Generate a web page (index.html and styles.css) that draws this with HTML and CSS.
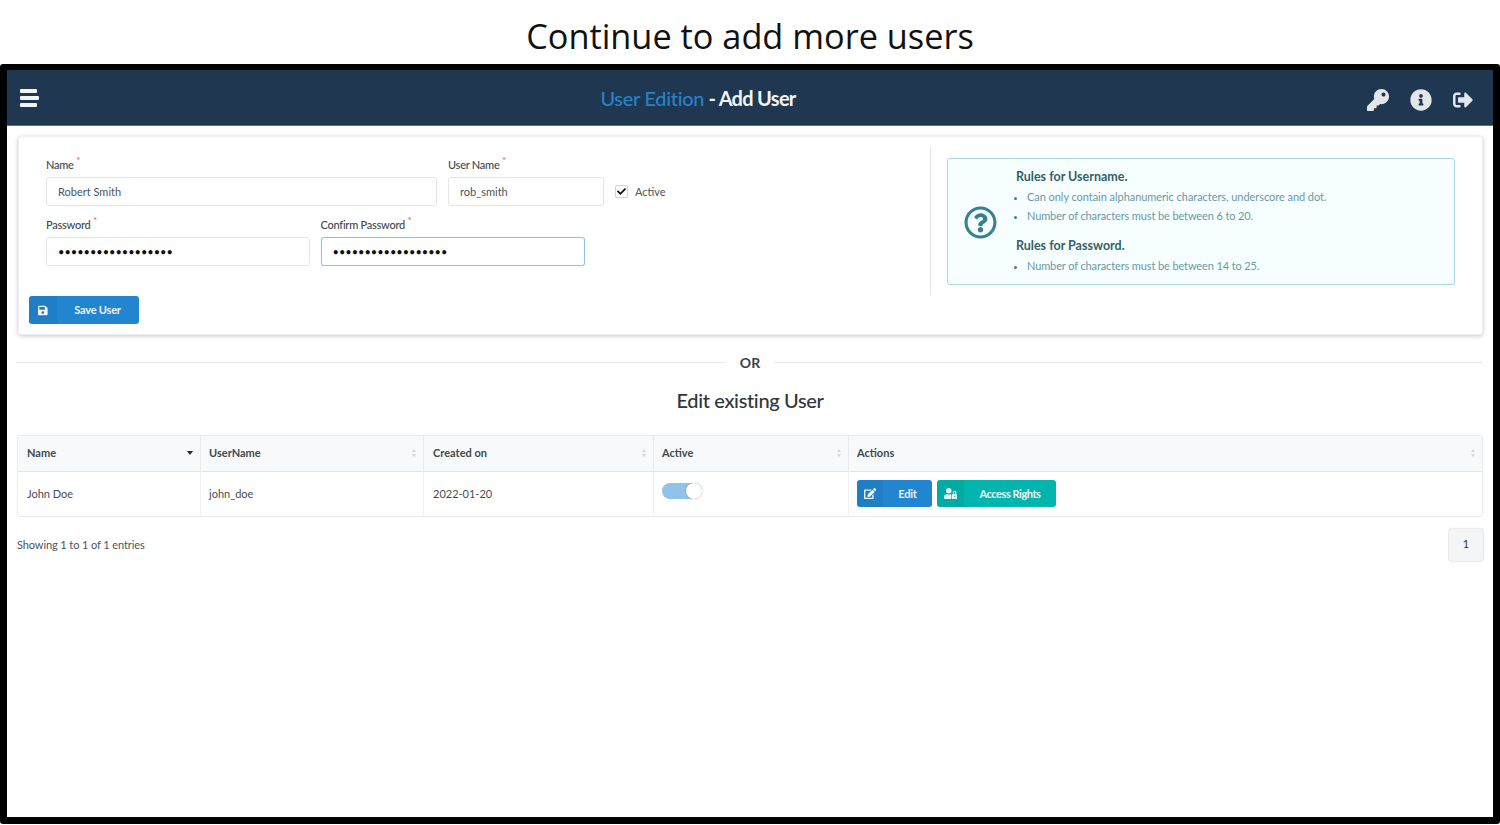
FILE: index.html
```html
<!DOCTYPE html>
<html lang="en">
<head>
    <meta charset="UTF-8">
    <title>User Edition - Add User</title>
    <link rel="stylesheet" href="styles.css">
</head>
<body>
<h1 class="slide-title">Continue to add more users</h1>
<div class="frame">
    <header class="topbar">
        <div class="burger"><span></span><span class="mid"></span><span></span></div>
        <div class="topbar-title"><span class="accent">User Edition</span> - Add User</div>
        <div class="topbar-icons">
            <svg class="icon-key" viewBox="0 0 512 512"><path d="M512 176.001C512 273.203 433.202 352 336 352c-11.22 0-22.19-1.062-32.827-3.069l-24.012 27.014A23.999 23.999 0 0 1 261.223 384H224v40c0 13.255-10.745 24-24 24h-40v40c0 13.255-10.745 24-24 24H24c-13.255 0-24-10.745-24-24v-78.059c0-6.365 2.529-12.47 7.029-16.971l161.802-161.802C163.108 213.814 160 195.271 160 176 160 78.798 238.797.001 335.999 0 433.488-.001 512 78.511 512 176.001zM336 128c0 26.51 21.49 48 48 48s48-21.49 48-48-21.49-48-48-48-48 21.49-48 48z"/></svg>
            <svg class="icon-info" viewBox="0 0 512 512"><path d="M256 8C119.043 8 8 119.083 8 256c0 136.997 111.043 248 248 248s248-111.003 248-248C504 119.083 392.957 8 256 8zm0 110c23.196 0 42 18.804 42 42s-18.804 42-42 42-42-18.804-42-42 18.804-42 42-42zm56 254c0 6.627-5.373 12-12 12h-88c-6.627 0-12-5.373-12-12v-24c0-6.627 5.373-12 12-12h12v-64h-12c-6.627 0-12-5.373-12-12v-24c0-6.627 5.373-12 12-12h64c6.627 0 12 5.373 12 12v100h12c6.627 0 12 5.373 12 12v24z"/></svg>
            <svg class="icon-out" viewBox="0 0 512 512"><path d="M497 273L329 441c-15 15-41 4.5-41-17v-96H152c-13.3 0-24-10.7-24-24v-96c0-13.3 10.7-24 24-24h136V88c0-21.4 25.9-32 41-17l168 168c9.3 9.4 9.3 24.6 0 34zM192 436v-40c0-6.6-5.4-12-12-12H96c-17.7 0-32-14.3-32-32V160c0-17.7 14.3-32 32-32h84c6.6 0 12-5.4 12-12V76c0-6.6-5.4-12-12-12H96c-53 0-96 43-96 96v192c0 53 43 96 96 96h84c6.6 0 12-5.4 12-12z"/></svg>
        </div>
    </header>

    <main class="content">
        <section class="card">
            <div class="form-side">
                <div class="form-row row-one">
                    <div class="field field-name">
                        <label>Name <sup>*</sup></label>
                        <input type="text" value="Robert Smith">
                    </div>
                    <div class="field field-user">
                        <label>User Name <sup>*</sup></label>
                        <input type="text" value="rob_smith">
                    </div>
                    <div class="check-wrap">
                        <span class="check-box">
                            <svg viewBox="0 0 512 512"><path d="M173.898 439.404l-166.4-166.4c-9.997-9.997-9.997-26.206 0-36.204l36.203-36.204c9.997-9.998 26.207-9.998 36.204 0L192 312.69 432.095 72.596c9.997-9.997 26.207-9.997 36.204 0l36.203 36.204c9.997 9.997 9.997 26.206 0 36.204l-294.4 294.401c-9.998 9.997-26.207 9.997-36.204-.001z"/></svg>
                        </span>
                        <span>Active</span>
                    </div>
                </div>
                <div class="form-row row-two">
                    <div class="field field-pass">
                        <label>Password <sup>*</sup></label>
                        <input type="password" value="123456789012345678">
                    </div>
                    <div class="field field-pass">
                        <label>Confirm Password <sup>*</sup></label>
                        <input class="focused" type="password" value="123456789012345678">
                    </div>
                </div>
                <button type="button" class="btn btn-blue btn-save">
                    <span class="btn-icon"><svg viewBox="0 0 448 512"><path d="M433.941 129.941l-83.882-83.882A48 48 0 0 0 316.118 32H48C21.49 32 0 53.49 0 80v352c0 26.51 21.49 48 48 48h352c26.51 0 48-21.49 48-48V163.882a48 48 0 0 0-14.059-33.941zM224 416c-35.346 0-64-28.654-64-64 0-35.346 28.654-64 64-64s64 28.654 64 64c0 35.346-28.654 64-64 64zm96-304.52V212c0 6.627-5.373 12-12 12H76c-6.627 0-12-5.373-12-12V108c0-6.627 5.373-12 12-12h228.52c3.183 0 6.235 1.264 8.485 3.515l3.48 3.48A11.996 11.996 0 0 1 320 111.48z"/></svg></span>
                    <span class="btn-text">Save User</span>
                </button>
            </div>
            <div class="rules-side">
                <div class="rules">
                    <svg class="rules-icon" viewBox="0 0 512 512"><path d="M256 8C119.043 8 8 119.083 8 256c0 136.997 111.043 248 248 248s248-111.003 248-248C504 119.083 392.957 8 256 8zm0 448c-110.532 0-200-89.431-200-200 0-110.495 89.472-200 200-200 110.491 0 200 89.471 200 200 0 110.53-89.431 200-200 200zm107.244-255.2c0 67.052-72.421 68.084-72.421 92.863V300c0 6.627-5.373 12-12 12h-45.647c-6.627 0-12-5.373-12-12v-8.659c0-35.745 27.1-50.034 47.579-61.516 17.561-9.845 28.324-16.541 28.324-29.579 0-17.246-21.999-28.693-39.784-28.693-23.189 0-33.894 10.977-48.942 29.969-4.057 5.12-11.46 6.071-16.666 2.124l-27.824-21.098c-5.107-3.872-6.251-11.066-2.644-16.363C184.846 131.491 214.94 112 261.794 112c49.071 0 101.45 38.304 101.45 88.8zM298 368c0 23.159-18.841 42-42 42s-42-18.841-42-42 18.841-42 42-42 42 18.841 42 42z"/></svg>
                    <div class="rules-text">
                        <h4>Rules for Username.</h4>
                        <ul>
                            <li class="wide">Can only contain alphanumeric characters, underscore and dot.</li>
                            <li>Number of characters must be between 6 to 20.</li>
                        </ul>
                        <h4>Rules for Password.</h4>
                        <ul>
                            <li>Number of characters must be between 14 to 25.</li>
                        </ul>
                    </div>
                </div>
            </div>
        </section>

        <div class="or-divider"><span>OR</span></div>
        <h2 class="edit-title">Edit existing User</h2>

        <table class="users">
            <colgroup>
                <col class="col-name"><col class="col-user"><col class="col-date"><col class="col-active"><col>
            </colgroup>
            <thead>
                <tr>
                    <th><div class="th-in">Name<span class="sort-down"></span></div></th>
                    <th><div class="th-in">UserName<span class="sort"></span></div></th>
                    <th><div class="th-in">Created on<span class="sort"></span></div></th>
                    <th><div class="th-in">Active<span class="sort"></span></div></th>
                    <th><div class="th-in">Actions<span class="sort"></span></div></th>
                </tr>
            </thead>
            <tbody>
                <tr>
                    <td>John Doe</td>
                    <td>john_doe</td>
                    <td>2022-01-20</td>
                    <td><div class="toggle"><span class="knob"></span></div></td>
                    <td>
                        <div class="actions">
                            <button type="button" class="btn btn-blue btn-edit">
                                <span class="btn-icon"><svg viewBox="0 0 576 512"><path d="M402.6 83.2l90.2 90.2c3.8 3.8 3.8 10 0 13.8L274.4 405.6l-92.8 10.3c-12.4 1.4-22.9-9.1-21.5-21.5l10.3-92.8L388.8 83.2c3.8-3.8 10-3.8 13.8 0zm162-22.9l-48.8-48.8c-15.2-15.2-39.9-15.2-55.2 0l-35.4 35.4c-3.8 3.8-3.8 10 0 13.8l90.2 90.2c3.8 3.8 10 3.8 13.8 0l35.4-35.4c15.2-15.3 15.2-40 0-55.2zM384 346.2V448H64V128h229.8c3.2 0 6.2-1.3 8.5-3.5l40-40c7.6-7.6 2.2-20.5-8.5-20.5H48C21.5 64 0 85.5 0 112v352c0 26.5 21.5 48 48 48h352c26.5 0 48-21.5 48-48V306.2c0-10.7-12.9-16-20.5-8.5l-40 40c-2.2 2.3-3.5 5.3-3.5 8.5z"/></svg></span>
                                <span class="btn-text">Edit</span>
                            </button>
                            <button type="button" class="btn btn-teal btn-rights">
                                <span class="btn-icon"><svg viewBox="0 0 640 512"><path d="M224 256A128 128 0 1 0 96 128a128 128 0 0 0 128 128zm96 64a63.08 63.08 0 0 1 8.1-30.5c-4.8-.5-9.5-1.5-14.5-1.5h-16.7a174.08 174.08 0 0 1-145.8 0h-16.7A134.43 134.43 0 0 0 0 422.4V464a48 48 0 0 0 48 48h280.9a63.54 63.54 0 0 1-8.9-32zm288-32h-32v-80a80 80 0 0 0-160 0v80h-32a32 32 0 0 0-32 32v160a32 32 0 0 0 32 32h224a32 32 0 0 0 32-32V320a32 32 0 0 0-32-32zM496 432a32 32 0 1 1 32-32 32 32 0 0 1-32 32zm32-144h-64v-80a32 32 0 0 1 64 0z"/></svg></span>
                                <span class="btn-text">Access Rights</span>
                            </button>
                        </div>
                    </td>
                </tr>
            </tbody>
        </table>

        <div class="table-foot">
            <span class="showing">Showing 1 to 1 of 1 entries</span>
            <span class="page-num">1</span>
        </div>
    </main>
</div>
</body>
</html>
```

FILE: styles.css
```css
* {
    box-sizing: border-box;
}
body {
    margin: 0;
    background: #fff;
    font-family: "Lato", "Liberation Sans", sans-serif;
    color: #3d4a52;
    overflow: hidden;
}
.slide-title {
    margin: 0;
    height: 64px;
    padding-top: 13px;
    text-align: center;
    font-family: "Open Sans", "Liberation Sans", sans-serif;
    font-weight: 400;
    font-size: 34.3px;
    line-height: 46px;
    color: #111;
}
.frame {
    height: 760px;
    border: 7px solid #000;
    border-top-width: 6px;
    border-radius: 3px;
    background: #fff;
}
.topbar {
    display: flex;
    align-items: center;
    justify-content: space-between;
    height: 56px;
    padding: 0 20px 0 13px;
    background: #1f3750;
    border-bottom: 1px solid #5b6d7f;
}
.burger {
    display: flex;
    flex-direction: column;
    gap: 3px;
    width: 20px;
}
.burger span {
    display: block;
    width: 17px;
    height: 4px;
    background: #f2f4f6;
    border-radius: 1px;
}
.burger .mid {
    width: 19px;
}
.topbar-title {
    margin-left: -11px;
    font-size: 20px;
    font-weight: 700;
    letter-spacing: -0.7px;
    color: #f0f2f4;
}
.accent {
    color: #2583c9;
    font-weight: 500;
    letter-spacing: -0.3px;
}
.topbar-icons {
    display: flex;
    align-items: center;
    gap: 21px;
    margin-top: 5px;
}
.topbar-icons svg {
    display: block;
    width: 22px;
    height: 22px;
    fill: #e4e7ea;
}
.topbar-icons .icon-out {
    width: 20px;
    height: 20px;
}
.content {
    padding: 10px 10px 0 10px;
}
.card {
    display: flex;
    height: 199px;
    margin-left: 1px;
    border: 1px solid #eceef0;
    border-radius: 3px;
    box-shadow: 0 1px 4px rgba(0, 0, 0, 0.22);
    background: #fff;
}
.form-side {
    width: 911px;
    padding: 20px 0 0 11px;
}
.form-row {
    display: flex;
    gap: 11px;
    padding-left: 16px;
}
.row-one {
    height: 60px;
}
.row-two {
    gap: 10.5px;
    height: 79px;
}
.field label {
    display: block;
    height: 20px;
    font-size: 11px;
    font-weight: 500;
    letter-spacing: -0.25px;
    line-height: 15px;
    color: #3d4a52;
}
.field sup {
    color: #e85c5c;
    font-size: 10px;
    line-height: 0;
}
.field input {
    display: block;
    width: 100%;
    height: 29px;
    padding: 0 11px;
    border: 1px solid #e3e6e8;
    border-radius: 3px;
    font-family: inherit;
    font-size: 11px;
    color: #4a555c;
    background: #fff;
    outline: none;
}
.field input[type="password"] {
    color: #111;
}
.field input.focused {
    border-color: #8fc3e6;
    box-shadow: 0 0 1px #a9cfe9;
}
.field-name {
    width: 391px;
}
.field-user {
    width: 156px;
}
.field-pass {
    width: 264px;
}
.check-wrap {
    display: flex;
    align-items: center;
    gap: 7px;
    height: 29px;
    margin-top: 20px;
    font-size: 11px;
    color: #4a555c;
}
.check-box {
    display: flex;
    align-items: center;
    justify-content: center;
    width: 13px;
    height: 13px;
    border: 1px solid #cfd3d6;
    border-radius: 2px;
}
.check-box svg {
    width: 9px;
    height: 9px;
    fill: #111;
}
.btn {
    display: inline-flex;
    align-items: stretch;
    padding: 0;
    border: none;
    border-radius: 3px;
    font-family: inherit;
    font-size: 11px;
    font-weight: 700;
    letter-spacing: -0.2px;
    color: #eef5fa;
    overflow: hidden;
}
.btn-blue {
    background: #2185d0;
}
.btn-teal {
    background: #00b5ad;
}
.btn-icon {
    display: flex;
    align-items: center;
    justify-content: center;
    background: rgba(0, 0, 0, 0.05);
}
.btn-icon svg {
    display: block;
    height: 11px;
    fill: #eef5fa;
}
.btn-text {
    display: flex;
    flex: 1;
    align-items: center;
    justify-content: center;
}
.btn-save {
    width: 110px;
    height: 28px;
    margin-left: -1px;
}
.btn-save .btn-icon {
    width: 28px;
}
.btn-save .btn-text {
    padding: 0 1px 2px 0;
}
.btn-edit {
    width: 75px;
    height: 27px;
}
.btn-edit .btn-icon {
    width: 26px;
}
.btn-rights {
    width: 119px;
    height: 27px;
    letter-spacing: -0.45px;
}
.btn-rights .btn-icon {
    width: 27px;
}
.rules-side {
    flex: 1;
    margin: 11px 0 39px;
    padding: 10px 27px 0 16px;
    border-left: 1px solid #e4e6e8;
}
.rules {
    display: flex;
    height: 127px;
    padding: 0 0 0 16px;
    border: 1px solid #a9d8e4;
    border-radius: 3px;
    background: #f7feff;
    color: #6a9aa2;
}
.rules-icon {
    flex: none;
    width: 33px;
    height: 33px;
    margin: 47px 19px 0 0;
    fill: #37808f;
}
.rules-text h4 {
    margin: 10px 0 0;
    font-size: 12.5px;
    font-weight: 700;
    line-height: 16px;
    color: #33616b;
}
.rules-text h4 + ul + h4 {
    margin-top: 13px;
}
.rules-text ul {
    margin: 2px 0 0;
    padding: 0 0 0 11px;
    font-size: 11px;
    line-height: 19px;
    letter-spacing: -0.12px;
}
.rules-text li.wide {
    letter-spacing: -0.05px;
}
.rules-text li::marker {
    font-size: 10px;
    color: #37808f;
}
.or-divider {
    display: flex;
    align-items: center;
    gap: 14px;
    height: 16px;
    margin-top: 19px;
    font-size: 14px;
    font-weight: 700;
    color: #3b4348;
}
.or-divider::before,
.or-divider::after {
    content: "";
    flex: 1;
    height: 1px;
    background: #e6e8ea;
}
.edit-title {
    margin: 17px 0 0;
    height: 39px;
    text-align: center;
    font-size: 20px;
    font-weight: 500;
    letter-spacing: -0.35px;
    line-height: 26px;
    color: #2f363b;
}
.users {
    width: 100%;
    margin-top: 9px;
    border-collapse: separate;
    border-spacing: 0;
    table-layout: fixed;
    border: 1px solid #e9ebed;
    border-radius: 3px;
    font-size: 11px;
}
.col-name {
    width: 182px;
}
.col-user {
    width: 223px;
}
.col-date {
    width: 230px;
}
.col-active {
    width: 195px;
}
.users th {
    height: 36px;
    padding: 0 6px 2px 8px;
    background: #f8f9fa;
    border-bottom: 1px solid #e3e5e8;
    border-left: 1px solid #e9ebed;
    text-align: left;
    font-weight: 700;
    color: #3d4a52;
}
.users td {
    height: 44px;
    padding: 0 8px 1px;
    border-left: 1px solid #eff0f2;
    color: #454e55;
}
.users th:first-child,
.users td:first-child {
    padding-left: 9px;
    border-left: none;
}
.users th:nth-child(3),
.users td:nth-child(3) {
    padding-left: 9px;
}
.th-in {
    display: flex;
    align-items: center;
    justify-content: space-between;
}
.sort {
    position: relative;
    width: 5px;
    height: 8px;
}
.sort::before,
.sort::after {
    content: "";
    position: absolute;
    left: 0;
    border-left: 2.5px solid transparent;
    border-right: 2.5px solid transparent;
}
.sort::before {
    top: 0;
    border-bottom: 3px solid #d4d6d8;
}
.sort::after {
    bottom: 0;
    border-top: 3px solid #d4d6d8;
}
.sort-down {
    margin-right: 1px;
    border-left: 3.5px solid transparent;
    border-right: 3.5px solid transparent;
    border-top: 4px solid #23282c;
}
.toggle {
    position: relative;
    width: 40px;
    height: 16px;
    margin-top: -5px;
    border-radius: 8px;
    background: #93c2e7;
}
.knob {
    position: absolute;
    top: 0;
    right: 0;
    width: 16px;
    height: 16px;
    border-radius: 50%;
    background: #fff;
    box-shadow: 0 0 2px rgba(0, 0, 0, 0.25);
}
.actions {
    display: flex;
    gap: 5px;
}
.table-foot {
    display: flex;
    align-items: center;
    justify-content: space-between;
    margin-top: 12px;
    font-size: 11px;
    letter-spacing: -0.1px;
    color: #4a555c;
}
.showing {
    margin-bottom: 1px;
}
.page-num {
    display: flex;
    align-items: center;
    justify-content: center;
    width: 34px;
    height: 32px;
    padding-bottom: 3px;
    border-radius: 3px;
    background: #f4f5f6;
    box-shadow: 0 0 2px rgba(0, 0, 0, 0.3);
    font-size: 11px;
    color: #333;
}
```
